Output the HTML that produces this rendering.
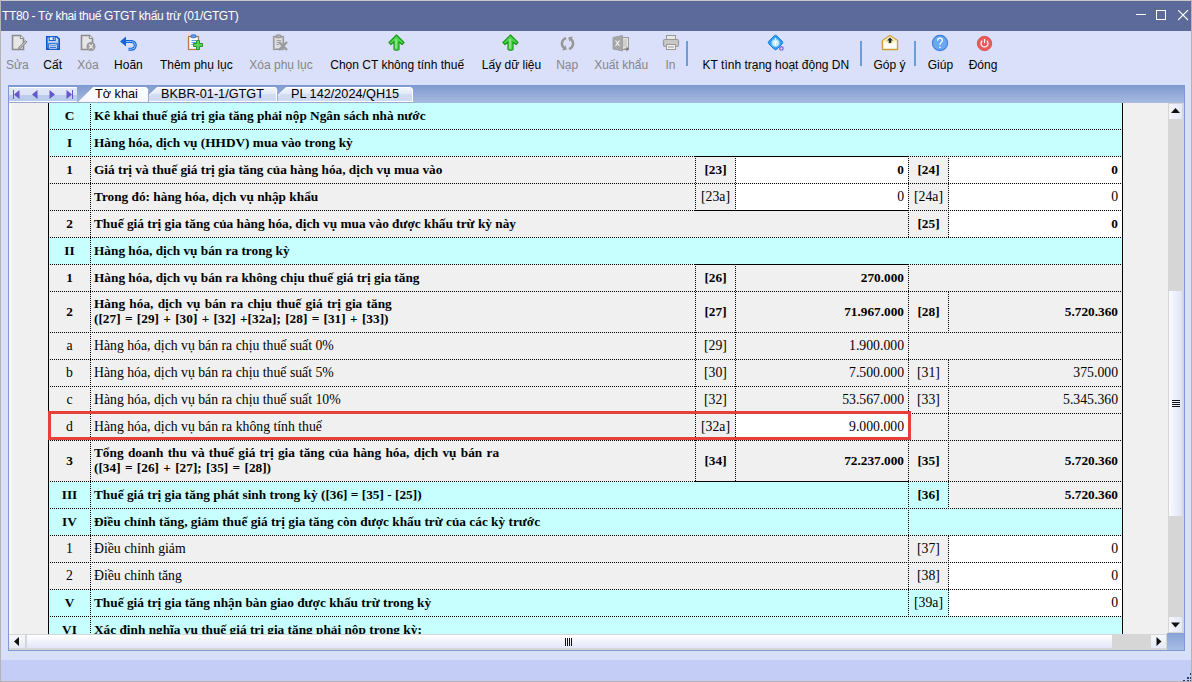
<!DOCTYPE html>
<html><head><meta charset="utf-8">
<style>
html,body{margin:0;padding:0;width:1192px;height:682px;overflow:hidden;background:#dae0f9;position:relative}
div{position:absolute;box-sizing:content-box}
.hd{height:1px;background:repeating-linear-gradient(to right,#000 0 1px,transparent 1px 2px)}
.vd{width:1px;background:repeating-linear-gradient(to bottom,#000 0 1px,transparent 1px 2px)}
.t{display:flex;align-items:center;font-family:"Liberation Serif",serif;color:#000;line-height:15px;white-space:nowrap;overflow:visible}
.t.b2{font-weight:bold;font-size:13.3px;word-spacing:1px;padding-bottom:3px;box-sizing:border-box}
.t.b{font-weight:bold;font-size:13.3px;padding-bottom:2px;box-sizing:border-box}
.t.n{font-weight:normal;font-size:13.75px;padding-bottom:1px;box-sizing:border-box}
.tab{font-family:"Liberation Sans",sans-serif;font-size:12.7px;color:#000;white-space:nowrap;line-height:15px}
.tl{font-family:"Liberation Sans",sans-serif;font-size:12px;text-align:center;white-space:nowrap;line-height:15px}
</style></head><body>
<!-- window frame -->
<div style="left:0;top:0;width:1192px;height:682px;background:#dae0f9"></div>
<div style="left:0;top:0;width:1192px;height:1px;background:#c8c8c8"></div>
<div style="left:0;top:0;width:1px;height:682px;background:#b4b4b4"></div>
<div style="left:1191px;top:0;width:1px;height:682px;background:#b4b4b4"></div>
<div style="left:0;top:681px;width:1192px;height:1px;background:#b4b4b4"></div>
<!-- title bar -->
<div style="left:1px;top:1px;width:1190px;height:30px;background:#5c6a9b"></div>
<div style="left:2px;top:9px;font-family:'Liberation Sans',sans-serif;font-size:12px;color:#fff;white-space:nowrap;letter-spacing:-0.35px;line-height:15px">TT80 - Tờ khai thuế GTGT khấu trừ (01/GTGT)</div>
<div style="left:1136px;top:14px;width:10px;height:1px;background:#fff"></div>
<div style="left:1156px;top:10px;width:8px;height:8px;border:1px solid #fff"></div>
<svg style="position:absolute;left:1178px;top:10px" width="11" height="11"><path d="M0 0L10 10M10 0L0 10" stroke="#fff" stroke-width="1.1"/></svg>
<!-- toolbar -->
<div class="tl" style="left:-82.7px;top:58px;width:200px;color:#868686">Sửa</div>
<div class="tl" style="left:-47.3px;top:58px;width:200px;color:#000">Cất</div>
<div class="tl" style="left:-12.099999999999994px;top:58px;width:200px;color:#868686">Xóa</div>
<div class="tl" style="left:28.400000000000006px;top:58px;width:200px;color:#000">Hoãn</div>
<div class="tl" style="left:96.30000000000001px;top:58px;width:200px;color:#000">Thêm phụ lục</div>
<div class="tl" style="left:181px;top:58px;width:200px;color:#868686">Xóa phụ lục</div>
<div class="tl" style="left:297.2px;top:58px;width:200px;color:#000">Chọn CT không tính thuế</div>
<div class="tl" style="left:411.5px;top:58px;width:200px;color:#000">Lấy dữ liệu</div>
<div class="tl" style="left:467.20000000000005px;top:58px;width:200px;color:#868686">Nạp</div>
<div class="tl" style="left:521.2px;top:58px;width:200px;color:#868686">Xuất khẩu</div>
<div class="tl" style="left:570.5px;top:58px;width:200px;color:#868686">In</div>
<div class="tl" style="left:675.9px;top:58px;width:200px;color:#000">KT tình trạng hoạt động DN</div>
<div class="tl" style="left:789.5px;top:58px;width:200px;color:#000">Góp ý</div>
<div class="tl" style="left:840.4px;top:58px;width:200px;color:#000">Giúp</div>
<div class="tl" style="left:883px;top:58px;width:200px;color:#000">Đóng</div>
<div style="left:686px;top:41px;width:2px;height:25px;background:#6d9dd8"></div>
<div style="left:860px;top:41px;width:2px;height:25px;background:#6d9dd8"></div>
<div style="left:914px;top:41px;width:2px;height:25px;background:#6d9dd8"></div>
<svg style="position:absolute;left:11px;top:34px" width="18" height="18" viewBox="0 0 18 18"><path d="M1.5 1.5H9.5L12.5 4.5V15.5H1.5Z" fill="#e6e6e6" stroke="#8c8c8c" stroke-width="1.6"/><path d="M9.5 1.5V4.5H12.5" fill="#fff" stroke="#8c8c8c" stroke-width="1.2"/><path d="M7 16L8 13L14.5 6.5L16 8L9.5 14.5Z" fill="#b4b4b4" stroke="#8c8c8c" stroke-width="0.9"/></svg>
<svg style="position:absolute;left:45px;top:35px" width="16" height="16" viewBox="0 0 16 16"><defs><linearGradient id="sv" x1="0" y1="0" x2="0" y2="1"><stop offset="0" stop-color="#e4eefc"/><stop offset="1" stop-color="#6e9fe6"/></linearGradient></defs><path d="M1.8 1.8H11.8L14.2 4.2V14.2H1.8Z" fill="url(#sv)" stroke="#0b55cc" stroke-width="1.6"/><rect x="4.2" y="1.8" width="6" height="3.6" fill="#fff" stroke="#0b55cc" stroke-width="1"/><rect x="7.6" y="2.6" width="1.6" height="2" fill="#0b55cc"/><rect x="3.8" y="8.8" width="8.4" height="5.4" fill="#fff" stroke="#0b55cc" stroke-width="1"/><path d="M5 10.8H11M5 12.6H11" stroke="#0b55cc" stroke-width="0.9"/></svg>
<svg style="position:absolute;left:80px;top:34px" width="17" height="18" viewBox="0 0 17 18"><path d="M1.5 1.5H9.5L12.5 4.5V15.5H1.5Z" fill="#e6e6e6" stroke="#8c8c8c" stroke-width="1.6"/><path d="M9.5 1.5V4.5H12.5" fill="#fff" stroke="#8c8c8c" stroke-width="1.2"/><circle cx="11" cy="12.5" r="4.5" fill="#9a9a9a"/><path d="M9 10.5L13 14.5M13 10.5L9 14.5" stroke="#eee" stroke-width="1.1"/></svg>
<svg style="position:absolute;left:119px;top:35px" width="18" height="16" viewBox="0 0 18 16"><path d="M6 6.5H12.5A3.8 3.8 0 0 1 12.5 14.2H9.5" fill="none" stroke="#1565d8" stroke-width="3"/><path d="M6 6.5H12.5A3.8 3.8 0 0 1 12.5 14.2H9.5" fill="none" stroke="#8fc0f8" stroke-width="1"/><path d="M1 6.5L7 1.5V11.5Z" fill="#1565d8"/></svg>
<svg style="position:absolute;left:187px;top:34px" width="17" height="17" viewBox="0 0 17 17"><rect x="1.5" y="2.5" width="10" height="13" fill="#e8f2ff" stroke="#b8784a" stroke-width="1.2"/><rect x="3" y="4" width="7" height="10" fill="#fff"/><path d="M4.5 6.5H9M4.5 8.5H9M4.5 10.5H7" stroke="#4a90e2" stroke-width="0.9"/><rect x="4" y="0.8" width="5" height="3" rx="1.2" fill="#5aa0ec" stroke="#2a6ac8" stroke-width="0.8"/><path d="M9.5 6.5H12.5V9.5H15.5V12.5H12.5V15.5H9.5V12.5H6.5V9.5H9.5Z" fill="#5ad25a" stroke="#1f9a1f" stroke-width="1"/></svg>
<svg style="position:absolute;left:272px;top:34px" width="17" height="17" viewBox="0 0 17 17"><rect x="1.5" y="2.5" width="10" height="13" fill="#bdbdbd" stroke="#9a9a9a" stroke-width="1.2"/><rect x="3" y="4" width="7" height="10" fill="#dedede"/><path d="M4.5 6.5H9M4.5 8.5H9M4.5 10.5H7" stroke="#9a9a9a" stroke-width="0.9"/><rect x="4" y="0.8" width="5" height="3" rx="1.2" fill="#b0b0b0" stroke="#8c8c8c" stroke-width="0.8"/><path d="M7 8L15 16M15 8L7 16" stroke="#9a9a9a" stroke-width="2.4"/></svg>
<svg style="position:absolute;left:388px;top:34px" width="17" height="17" viewBox="0 0 17 17"><path d="M8.5 1L16 8.5L14 10.5L11 7.8V15.5Q8.5 17 6 15.5V7.8L3 10.5L1 8.5Z" fill="#4ed64e" stroke="#1e9a1e" stroke-width="1.2" stroke-linejoin="round"/><path d="M8 5V14.5" stroke="#b8f5b8" stroke-width="1"/></svg>
<svg style="position:absolute;left:502px;top:34px" width="17" height="17" viewBox="0 0 17 17"><path d="M8.5 1L16 8.5L14 10.5L11 7.8V15.5Q8.5 17 6 15.5V7.8L3 10.5L1 8.5Z" fill="#4ed64e" stroke="#1e9a1e" stroke-width="1.2" stroke-linejoin="round"/><path d="M8 5V14.5" stroke="#b8f5b8" stroke-width="1"/></svg>
<svg style="position:absolute;left:559px;top:35px" width="17" height="17" viewBox="0 0 17 17"><path d="M7.1 3.1A5.6 5.6 0 0 0 5.3 13.1" fill="none" stroke="#979797" stroke-width="2.4"/><path d="M9.9 13.9A5.6 5.6 0 0 0 11.7 3.9" fill="none" stroke="#979797" stroke-width="2.4"/><path d="M7.7 14.8L3.0 15.4L6.7 10.2Z" fill="#979797"/><path d="M9.3 2.2L14.0 1.6L10.3 6.8Z" fill="#979797"/></svg>
<svg style="position:absolute;left:612px;top:34px" width="18" height="18" viewBox="0 0 18 18"><rect x="9.5" y="3.5" width="7" height="12" fill="#e4e4e4" stroke="#9a9a9a" stroke-width="1"/><path d="M11 6H15M11 8H15M11 10H15M11 12H15" stroke="#b0b0b0" stroke-width="0.8"/><path d="M1 3.5L10.5 1.5V17L1 15Z" fill="#a6a6a6" stroke="#999" stroke-width="0.8"/><path d="M3.5 6.5L7.5 12M7.5 6.5L3.5 12" stroke="#f2f2f2" stroke-width="1.2"/><path d="M11 14.5H14.5V12.5L17 15L14.5 17.5V15.5" fill="#777"/></svg>
<svg style="position:absolute;left:662px;top:34px" width="18" height="17" viewBox="0 0 18 17"><rect x="4.5" y="1.5" width="9" height="4" fill="#e8e8e8" stroke="#9a9a9a" stroke-width="1"/><rect x="1.5" y="5.5" width="15" height="7" rx="1.5" fill="#c8c8c8" stroke="#9a9a9a" stroke-width="1.2"/><rect x="4.5" y="10.5" width="9" height="5" fill="#f0f0f0" stroke="#9a9a9a" stroke-width="1"/><path d="M6 13H12" stroke="#9a9a9a" stroke-width="1"/></svg>
<svg style="position:absolute;left:767px;top:34px" width="18" height="18" viewBox="0 0 18 18"><path d="M8.5 1.2Q9 1 9.5 1.5L15.5 7.5Q16 8.5 15.5 9.5L9.5 15.5Q8.5 16.2 7.5 15.5L1.5 9.5Q1 8.5 1.5 7.5L7.5 1.5Q8 1 8.5 1.2Z" fill="#2f9cf2" stroke="#1a80e0" stroke-width="1"/><circle cx="8.5" cy="9" r="4" fill="#c6ebff" stroke="#6cc0f6" stroke-width="1"/><path d="M6.5 7.3H10.5V8.3H9.1V11.5H7.9V8.3H6.5Z" fill="#fff"/><circle cx="8.5" cy="4.6" r="0.9" fill="#fff8d0"/><rect x="12.8" y="12.8" width="3.2" height="3.2" rx="1" fill="none" stroke="#7a5ad8" stroke-width="1.2"/></svg>
<svg style="position:absolute;left:881px;top:34px" width="18" height="17" viewBox="0 0 18 17"><path d="M1.5 6.5L9 1.5L16.5 6.5V15.5H1.5Z" fill="#fff" stroke="#c8a030" stroke-width="1.4" stroke-linejoin="round"/><path d="M2 6.8L9 2.2L16 6.8L9 10.5Z" fill="#fbe9a6"/><path d="M9 3.5L12 6.5H10.2V9H7.8V6.5H6Z" fill="#1e2a3a"/></svg>
<svg style="position:absolute;left:931px;top:34px" width="18" height="18" viewBox="0 0 18 18"><circle cx="9" cy="9" r="7.6" fill="#6aa8f2" stroke="#3a7ede" stroke-width="1.1"/><path d="M6.6 6.8Q6.6 4.2 9 4.2Q11.4 4.2 11.4 6.6Q11.4 8 9.6 9Q9 9.4 9 11" fill="none" stroke="#fff" stroke-width="1.2"/><circle cx="9" cy="13.2" r="0.8" fill="#fff"/></svg>
<svg style="position:absolute;left:976px;top:34px" width="18" height="18" viewBox="0 0 18 18"><circle cx="8.5" cy="9.5" r="7.2" fill="#ea5a5a" stroke="#d84848" stroke-width="0.8"/><path d="M6.2 6.8A3.5 3.5 0 1 0 10.8 6.8" fill="none" stroke="#fff" stroke-width="1.2"/><path d="M8.5 5V9.2" stroke="#fff" stroke-width="1.2"/></svg>
<!-- panel border -->
<div style="left:8px;top:85px;width:1177px;height:566px;background:#7f9ad2"></div>
<svg style="position:absolute;left:8px;top:85px" width="1177" height="18" viewBox="8 85 1177 18">
<defs><linearGradient id="tsb" x1="0" y1="0" x2="0" y2="1"><stop offset="0" stop-color="#819bd0"/><stop offset="1" stop-color="#a7bbe1"/></linearGradient><linearGradient id="tin" x1="0" y1="0" x2="0" y2="1"><stop offset="0" stop-color="#f3f6fd"/><stop offset="0.45" stop-color="#e2e9f8"/><stop offset="0.5" stop-color="#d2ddf3"/><stop offset="1" stop-color="#cdd9f2"/></linearGradient><linearGradient id="nav" x1="0" y1="0" x2="0" y2="1"><stop offset="0" stop-color="#e2e8f8"/><stop offset="0.5" stop-color="#dbe3f6"/><stop offset="0.55" stop-color="#bccdec"/><stop offset="1" stop-color="#b9cbec"/></linearGradient><linearGradient id="tac" x1="0" y1="0" x2="0" y2="1"><stop offset="0" stop-color="#ffffff"/><stop offset="1" stop-color="#f4f7fd"/></linearGradient></defs>
<rect x="8" y="85" width="1177" height="18" fill="#7f9ad2"/>
<rect x="9" y="86" width="1175" height="17" fill="url(#tsb)"/>
<rect x="9" y="87" width="68" height="15" fill="url(#nav)"/>
<rect x="9" y="87" width="68" height="1" fill="#fff"/>
<rect x="9" y="101" width="68" height="1" fill="#fff"/>
<rect x="13" y="90" width="1" height="9" fill="#6655cc"/><path d="M14 94.5L19.5 90V99Z" fill="#6655cc"/>
<path d="M32 94.5L37.5 90V99Z" fill="#6655cc"/>
<path d="M55 94.5L49.5 90V99Z" fill="#6655cc"/>
<path d="M72 94.5L66.5 90V99Z" fill="#6655cc"/><rect x="72" y="90" width="1" height="9" fill="#6655cc"/>
<path d="M277 102V96L286 87H411L413 89V102Z" fill="url(#tin)"/>
<path d="M277.5 96L286.5 87.5H410.5L412.5 89.5V102" fill="none" stroke="#fff" stroke-width="1"/>
<path d="M148 102V96L157 87H275L277 89V102Z" fill="url(#tin)"/>
<path d="M148.5 96L157.5 87.5H275.5L276.5 89.5V102" fill="none" stroke="#fff" stroke-width="1"/>
<rect x="277" y="89" width="1" height="13" fill="#9aaed6"/>
<rect x="149" y="101" width="264" height="1" fill="#fff"/>
<path d="M78 102L93 87H146L148 89V102Z" fill="url(#tac)"/>
<rect x="148" y="89" width="1" height="13" fill="#9aaed6"/>
<rect x="9" y="102" width="404" height="1" fill="#9aa9cc"/>
</svg>
<div class="tab" style="left:95px;top:87px">Tờ khai</div>
<div class="tab" style="left:161px;top:87px">BKBR-01-1/GTGT</div>
<div class="tab" style="left:291px;top:87px">PL 142/2024/QH15</div>
<div id="tbl" style="left:9px;top:103px;width:1159px;height:531px;overflow:hidden;background:#f0f0f0">
<div style="left:-9px;top:-103px;width:1192px;height:682px">
<div style="left:9px;top:103px;width:5px;height:560px;background:linear-gradient(to right,#fbfbfb,#f0f0f0)"></div>
<div style="left:49px;top:103px;width:1073px;height:26px;background:#c7ffff"></div>
<div class="t b" style="left:49px;top:103px;width:41px;height:26px;justify-content:center;text-align:center;"><span>C</span></div>
<div class="vd" style="left:90px;top:102px;height:28px"></div>
<div class="t b" style="left:94px;top:103px;width:1027px;height:26px;justify-content:flex-start;text-align:left;"><span>Kê khai thuế giá trị gia tăng phải nộp Ngân sách nhà nước</span></div>
<div class="hd" style="left:50px;top:129px;width:1072px"></div>
<div style="left:49px;top:130px;width:1073px;height:26px;background:#c7ffff"></div>
<div class="t b" style="left:49px;top:130px;width:41px;height:26px;justify-content:center;text-align:center;"><span>I</span></div>
<div class="vd" style="left:90px;top:130px;height:27px"></div>
<div class="t b" style="left:94px;top:130px;width:1027px;height:26px;justify-content:flex-start;text-align:left;"><span>Hàng hóa, dịch vụ (HHDV) mua vào trong kỳ</span></div>
<div class="hd" style="left:50px;top:156px;width:1072px"></div>
<div style="left:49px;top:157px;width:1073px;height:26px;background:#f0f0f0"></div>
<div class="t b" style="left:49px;top:157px;width:41px;height:26px;justify-content:center;text-align:center;"><span>1</span></div>
<div class="vd" style="left:90px;top:156px;height:28px"></div>
<div class="t b" style="left:94px;top:157px;width:600px;height:26px;justify-content:flex-start;text-align:left;"><span>Giá trị và thuế giá trị gia tăng của hàng hóa, dịch vụ mua vào</span></div>
<div style="left:696px;top:157px;width:39px;height:26px;background:#f0f0f0"></div>
<div class="vd" style="left:695px;top:156px;height:28px"></div>
<div class="t b" style="left:696px;top:157px;width:39px;height:26px;justify-content:center;text-align:center;"><span>[23]</span></div>
<div style="left:736px;top:157px;width:172px;height:26px;background:#ffffff"></div>
<div class="vd" style="left:735px;top:156px;height:28px"></div>
<div class="t b" style="left:736px;top:157px;width:168px;height:26px;justify-content:flex-end;text-align:right;"><span>0</span></div>
<div style="left:909px;top:157px;width:39px;height:26px;background:#f0f0f0"></div>
<div class="vd" style="left:908px;top:156px;height:28px"></div>
<div class="t b" style="left:909px;top:157px;width:39px;height:26px;justify-content:center;text-align:center;"><span>[24]</span></div>
<div style="left:949px;top:157px;width:173px;height:26px;background:#ffffff"></div>
<div class="vd" style="left:948px;top:156px;height:28px"></div>
<div class="t b" style="left:949px;top:157px;width:169px;height:26px;justify-content:flex-end;text-align:right;"><span>0</span></div>
<div class="hd" style="left:50px;top:183px;width:1072px"></div>
<div style="left:49px;top:184px;width:1073px;height:26px;background:#f0f0f0"></div>
<div class="t b" style="left:49px;top:184px;width:41px;height:26px;justify-content:center;text-align:center;"><span></span></div>
<div class="vd" style="left:90px;top:184px;height:27px"></div>
<div class="t b" style="left:94px;top:184px;width:600px;height:26px;justify-content:flex-start;text-align:left;"><span>Trong đó: hàng hóa, dịch vụ nhập khẩu</span></div>
<div style="left:696px;top:184px;width:39px;height:26px;background:#f0f0f0"></div>
<div class="vd" style="left:695px;top:184px;height:27px"></div>
<div class="t n" style="left:696px;top:184px;width:39px;height:26px;justify-content:center;text-align:center;"><span>[23a]</span></div>
<div style="left:736px;top:184px;width:172px;height:26px;background:#ffffff"></div>
<div class="vd" style="left:735px;top:184px;height:27px"></div>
<div class="t n" style="left:736px;top:184px;width:168px;height:26px;justify-content:flex-end;text-align:right;"><span>0</span></div>
<div style="left:909px;top:184px;width:39px;height:26px;background:#f0f0f0"></div>
<div class="vd" style="left:908px;top:184px;height:27px"></div>
<div class="t n" style="left:909px;top:184px;width:39px;height:26px;justify-content:center;text-align:center;"><span>[24a]</span></div>
<div style="left:949px;top:184px;width:173px;height:26px;background:#ffffff"></div>
<div class="vd" style="left:948px;top:184px;height:27px"></div>
<div class="t n" style="left:949px;top:184px;width:169px;height:26px;justify-content:flex-end;text-align:right;"><span>0</span></div>
<div class="hd" style="left:50px;top:210px;width:1072px"></div>
<div style="left:49px;top:211px;width:1073px;height:26px;background:#f0f0f0"></div>
<div class="t b" style="left:49px;top:211px;width:41px;height:26px;justify-content:center;text-align:center;"><span>2</span></div>
<div class="vd" style="left:90px;top:210px;height:28px"></div>
<div class="t b" style="left:94px;top:211px;width:813px;height:26px;justify-content:flex-start;text-align:left;"><span>Thuế giá trị gia tăng của hàng hóa, dịch vụ mua vào được khấu trừ kỳ này</span></div>
<div style="left:909px;top:211px;width:39px;height:26px;background:#f0f0f0"></div>
<div class="vd" style="left:908px;top:210px;height:28px"></div>
<div class="t b" style="left:909px;top:211px;width:39px;height:26px;justify-content:center;text-align:center;"><span>[25]</span></div>
<div style="left:949px;top:211px;width:173px;height:26px;background:#ffffff"></div>
<div class="vd" style="left:948px;top:210px;height:28px"></div>
<div class="t b" style="left:949px;top:211px;width:169px;height:26px;justify-content:flex-end;text-align:right;"><span>0</span></div>
<div class="hd" style="left:50px;top:237px;width:1072px"></div>
<div style="left:49px;top:238px;width:1073px;height:26px;background:#c7ffff"></div>
<div class="t b" style="left:49px;top:238px;width:41px;height:26px;justify-content:center;text-align:center;"><span>II</span></div>
<div class="vd" style="left:90px;top:238px;height:27px"></div>
<div class="t b" style="left:94px;top:238px;width:1027px;height:26px;justify-content:flex-start;text-align:left;"><span>Hàng hóa, dịch vụ bán ra trong kỳ</span></div>
<div class="hd" style="left:50px;top:264px;width:1072px"></div>
<div style="left:49px;top:265px;width:1073px;height:26px;background:#f0f0f0"></div>
<div class="t b" style="left:49px;top:265px;width:41px;height:26px;justify-content:center;text-align:center;"><span>1</span></div>
<div class="vd" style="left:90px;top:264px;height:28px"></div>
<div class="t b" style="left:94px;top:265px;width:600px;height:26px;justify-content:flex-start;text-align:left;"><span>Hàng hóa, dịch vụ bán ra không chịu thuế giá trị gia tăng</span></div>
<div style="left:696px;top:265px;width:39px;height:26px;background:#f0f0f0"></div>
<div class="vd" style="left:695px;top:264px;height:28px"></div>
<div class="t b" style="left:696px;top:265px;width:39px;height:26px;justify-content:center;text-align:center;"><span>[26]</span></div>
<div style="left:736px;top:265px;width:172px;height:26px;background:#f0f0f0"></div>
<div class="vd" style="left:735px;top:264px;height:28px"></div>
<div class="t b" style="left:736px;top:265px;width:168px;height:26px;justify-content:flex-end;text-align:right;"><span>270.000</span></div>
<div style="left:909px;top:265px;width:213px;height:26px;background:#f0f0f0"></div>
<div class="vd" style="left:908px;top:264px;height:28px"></div>
<div class="hd" style="left:50px;top:291px;width:1072px"></div>
<div style="left:49px;top:292px;width:1073px;height:40px;background:#f0f0f0"></div>
<div class="t b" style="left:49px;top:292px;width:41px;height:40px;justify-content:center;text-align:center;"><span>2</span></div>
<div class="vd" style="left:90px;top:292px;height:41px"></div>
<div class="t b2" style="left:94px;top:292px;width:600px;height:40px;justify-content:flex-start;text-align:left;"><span>Hàng hóa, dịch vụ bán ra chịu thuế giá trị gia tăng<br>([27] = [29] + [30] + [32] +[32a]; [28] = [31] + [33])</span></div>
<div style="left:696px;top:292px;width:39px;height:40px;background:#f0f0f0"></div>
<div class="vd" style="left:695px;top:292px;height:41px"></div>
<div class="t b" style="left:696px;top:292px;width:39px;height:40px;justify-content:center;text-align:center;"><span>[27]</span></div>
<div style="left:736px;top:292px;width:172px;height:40px;background:#f0f0f0"></div>
<div class="vd" style="left:735px;top:292px;height:41px"></div>
<div class="t b" style="left:736px;top:292px;width:168px;height:40px;justify-content:flex-end;text-align:right;"><span>71.967.000</span></div>
<div style="left:909px;top:292px;width:39px;height:40px;background:#f0f0f0"></div>
<div class="vd" style="left:908px;top:292px;height:41px"></div>
<div class="t b" style="left:909px;top:292px;width:39px;height:40px;justify-content:center;text-align:center;"><span>[28]</span></div>
<div style="left:949px;top:292px;width:173px;height:40px;background:#f0f0f0"></div>
<div class="vd" style="left:948px;top:292px;height:41px"></div>
<div class="t b" style="left:949px;top:292px;width:169px;height:40px;justify-content:flex-end;text-align:right;"><span>5.720.360</span></div>
<div class="hd" style="left:50px;top:332px;width:1072px"></div>
<div style="left:49px;top:333px;width:1073px;height:26px;background:#f0f0f0"></div>
<div class="t n" style="left:49px;top:333px;width:41px;height:26px;justify-content:center;text-align:center;"><span>a</span></div>
<div class="vd" style="left:90px;top:332px;height:28px"></div>
<div class="t n" style="left:94px;top:333px;width:600px;height:26px;justify-content:flex-start;text-align:left;"><span>Hàng hóa, dịch vụ bán ra chịu thuế suất 0%</span></div>
<div style="left:696px;top:333px;width:39px;height:26px;background:#f0f0f0"></div>
<div class="vd" style="left:695px;top:332px;height:28px"></div>
<div class="t n" style="left:696px;top:333px;width:39px;height:26px;justify-content:center;text-align:center;"><span>[29]</span></div>
<div style="left:736px;top:333px;width:172px;height:26px;background:#f0f0f0"></div>
<div class="vd" style="left:735px;top:332px;height:28px"></div>
<div class="t n" style="left:736px;top:333px;width:168px;height:26px;justify-content:flex-end;text-align:right;"><span>1.900.000</span></div>
<div style="left:909px;top:333px;width:213px;height:26px;background:#f0f0f0"></div>
<div class="vd" style="left:908px;top:332px;height:28px"></div>
<div class="hd" style="left:50px;top:359px;width:1072px"></div>
<div style="left:49px;top:360px;width:1073px;height:26px;background:#f0f0f0"></div>
<div class="t n" style="left:49px;top:360px;width:41px;height:26px;justify-content:center;text-align:center;"><span>b</span></div>
<div class="vd" style="left:90px;top:360px;height:27px"></div>
<div class="t n" style="left:94px;top:360px;width:600px;height:26px;justify-content:flex-start;text-align:left;"><span>Hàng hóa, dịch vụ bán ra chịu thuế suất 5%</span></div>
<div style="left:696px;top:360px;width:39px;height:26px;background:#f0f0f0"></div>
<div class="vd" style="left:695px;top:360px;height:27px"></div>
<div class="t n" style="left:696px;top:360px;width:39px;height:26px;justify-content:center;text-align:center;"><span>[30]</span></div>
<div style="left:736px;top:360px;width:172px;height:26px;background:#f0f0f0"></div>
<div class="vd" style="left:735px;top:360px;height:27px"></div>
<div class="t n" style="left:736px;top:360px;width:168px;height:26px;justify-content:flex-end;text-align:right;"><span>7.500.000</span></div>
<div style="left:909px;top:360px;width:39px;height:26px;background:#f0f0f0"></div>
<div class="vd" style="left:908px;top:360px;height:27px"></div>
<div class="t n" style="left:909px;top:360px;width:39px;height:26px;justify-content:center;text-align:center;"><span>[31]</span></div>
<div style="left:949px;top:360px;width:173px;height:26px;background:#f0f0f0"></div>
<div class="vd" style="left:948px;top:360px;height:27px"></div>
<div class="t n" style="left:949px;top:360px;width:169px;height:26px;justify-content:flex-end;text-align:right;"><span>375.000</span></div>
<div class="hd" style="left:50px;top:386px;width:1072px"></div>
<div style="left:49px;top:387px;width:1073px;height:26px;background:#f0f0f0"></div>
<div class="t n" style="left:49px;top:387px;width:41px;height:26px;justify-content:center;text-align:center;"><span>c</span></div>
<div class="vd" style="left:90px;top:386px;height:28px"></div>
<div class="t n" style="left:94px;top:387px;width:600px;height:26px;justify-content:flex-start;text-align:left;"><span>Hàng hóa, dịch vụ bán ra chịu thuế suất 10%</span></div>
<div style="left:696px;top:387px;width:39px;height:26px;background:#f0f0f0"></div>
<div class="vd" style="left:695px;top:386px;height:28px"></div>
<div class="t n" style="left:696px;top:387px;width:39px;height:26px;justify-content:center;text-align:center;"><span>[32]</span></div>
<div style="left:736px;top:387px;width:172px;height:26px;background:#f0f0f0"></div>
<div class="vd" style="left:735px;top:386px;height:28px"></div>
<div class="t n" style="left:736px;top:387px;width:168px;height:26px;justify-content:flex-end;text-align:right;"><span>53.567.000</span></div>
<div style="left:909px;top:387px;width:39px;height:26px;background:#f0f0f0"></div>
<div class="vd" style="left:908px;top:386px;height:28px"></div>
<div class="t n" style="left:909px;top:387px;width:39px;height:26px;justify-content:center;text-align:center;"><span>[33]</span></div>
<div style="left:949px;top:387px;width:173px;height:26px;background:#f0f0f0"></div>
<div class="vd" style="left:948px;top:386px;height:28px"></div>
<div class="t n" style="left:949px;top:387px;width:169px;height:26px;justify-content:flex-end;text-align:right;"><span>5.345.360</span></div>
<div class="hd" style="left:50px;top:413px;width:1072px"></div>
<div style="left:49px;top:414px;width:1073px;height:26px;background:#f0f0f0"></div>
<div class="t n" style="left:49px;top:414px;width:41px;height:26px;justify-content:center;text-align:center;"><span>d</span></div>
<div class="vd" style="left:90px;top:414px;height:27px"></div>
<div class="t n" style="left:94px;top:414px;width:600px;height:26px;justify-content:flex-start;text-align:left;"><span>Hàng hóa, dịch vụ bán ra không tính thuế</span></div>
<div style="left:696px;top:414px;width:39px;height:26px;background:#f0f0f0"></div>
<div class="vd" style="left:695px;top:414px;height:27px"></div>
<div class="t n" style="left:696px;top:414px;width:39px;height:26px;justify-content:center;text-align:center;"><span>[32a]</span></div>
<div style="left:736px;top:414px;width:172px;height:26px;background:#ffffff"></div>
<div class="vd" style="left:735px;top:414px;height:27px"></div>
<div class="t n" style="left:736px;top:414px;width:168px;height:26px;justify-content:flex-end;text-align:right;"><span>9.000.000</span></div>
<div style="left:909px;top:414px;width:39px;height:26px;background:#f0f0f0"></div>
<div class="vd" style="left:908px;top:414px;height:27px"></div>
<div style="left:949px;top:414px;width:173px;height:26px;background:#f0f0f0"></div>
<div class="vd" style="left:948px;top:414px;height:27px"></div>
<div class="hd" style="left:50px;top:440px;width:1072px"></div>
<div style="left:49px;top:441px;width:1073px;height:40px;background:#f0f0f0"></div>
<div class="t b" style="left:49px;top:441px;width:41px;height:40px;justify-content:center;text-align:center;"><span>3</span></div>
<div class="vd" style="left:90px;top:440px;height:42px"></div>
<div class="t b2" style="left:94px;top:441px;width:600px;height:40px;justify-content:flex-start;text-align:left;"><span>Tổng doanh thu và thuế giá trị gia tăng của hàng hóa, dịch vụ bán ra<br>([34] = [26] + [27]; [35] = [28])</span></div>
<div style="left:696px;top:441px;width:39px;height:40px;background:#f0f0f0"></div>
<div class="vd" style="left:695px;top:440px;height:42px"></div>
<div class="t b" style="left:696px;top:441px;width:39px;height:40px;justify-content:center;text-align:center;"><span>[34]</span></div>
<div style="left:736px;top:441px;width:172px;height:40px;background:#f0f0f0"></div>
<div class="vd" style="left:735px;top:440px;height:42px"></div>
<div class="t b" style="left:736px;top:441px;width:168px;height:40px;justify-content:flex-end;text-align:right;"><span>72.237.000</span></div>
<div style="left:909px;top:441px;width:39px;height:40px;background:#f0f0f0"></div>
<div class="vd" style="left:908px;top:440px;height:42px"></div>
<div class="t b" style="left:909px;top:441px;width:39px;height:40px;justify-content:center;text-align:center;"><span>[35]</span></div>
<div style="left:949px;top:441px;width:173px;height:40px;background:#f0f0f0"></div>
<div class="vd" style="left:948px;top:440px;height:42px"></div>
<div class="t b" style="left:949px;top:441px;width:169px;height:40px;justify-content:flex-end;text-align:right;"><span>5.720.360</span></div>
<div class="hd" style="left:50px;top:481px;width:1072px"></div>
<div style="left:49px;top:482px;width:1073px;height:26px;background:#c7ffff"></div>
<div class="t b" style="left:49px;top:482px;width:41px;height:26px;justify-content:center;text-align:center;"><span>III</span></div>
<div class="vd" style="left:90px;top:482px;height:27px"></div>
<div class="t b" style="left:94px;top:482px;width:813px;height:26px;justify-content:flex-start;text-align:left;"><span>Thuế giá trị gia tăng phát sinh trong kỳ ([36] = [35] - [25])</span></div>
<div style="left:909px;top:482px;width:39px;height:26px;background:#c7ffff"></div>
<div class="vd" style="left:908px;top:482px;height:27px"></div>
<div class="t b" style="left:909px;top:482px;width:39px;height:26px;justify-content:center;text-align:center;"><span>[36]</span></div>
<div style="left:949px;top:482px;width:173px;height:26px;background:#f0f0f0"></div>
<div class="vd" style="left:948px;top:482px;height:27px"></div>
<div class="t b" style="left:949px;top:482px;width:169px;height:26px;justify-content:flex-end;text-align:right;"><span>5.720.360</span></div>
<div class="hd" style="left:50px;top:508px;width:1072px"></div>
<div style="left:49px;top:509px;width:1073px;height:26px;background:#c7ffff"></div>
<div class="t b" style="left:49px;top:509px;width:41px;height:26px;justify-content:center;text-align:center;"><span>IV</span></div>
<div class="vd" style="left:90px;top:508px;height:28px"></div>
<div class="t b" style="left:94px;top:509px;width:813px;height:26px;justify-content:flex-start;text-align:left;"><span>Điều chỉnh tăng, giảm thuế giá trị gia tăng còn được khấu trừ của các kỳ trước</span></div>
<div style="left:909px;top:509px;width:213px;height:26px;background:#c7ffff"></div>
<div class="vd" style="left:908px;top:508px;height:28px"></div>
<div class="hd" style="left:50px;top:535px;width:1072px"></div>
<div style="left:49px;top:536px;width:1073px;height:26px;background:#f0f0f0"></div>
<div class="t n" style="left:49px;top:536px;width:41px;height:26px;justify-content:center;text-align:center;"><span>1</span></div>
<div class="vd" style="left:90px;top:536px;height:27px"></div>
<div class="t n" style="left:94px;top:536px;width:813px;height:26px;justify-content:flex-start;text-align:left;"><span>Điều chỉnh giảm</span></div>
<div style="left:909px;top:536px;width:39px;height:26px;background:#f0f0f0"></div>
<div class="vd" style="left:908px;top:536px;height:27px"></div>
<div class="t n" style="left:909px;top:536px;width:39px;height:26px;justify-content:center;text-align:center;"><span>[37]</span></div>
<div style="left:949px;top:536px;width:173px;height:26px;background:#ffffff"></div>
<div class="vd" style="left:948px;top:536px;height:27px"></div>
<div class="t n" style="left:949px;top:536px;width:169px;height:26px;justify-content:flex-end;text-align:right;"><span>0</span></div>
<div class="hd" style="left:50px;top:562px;width:1072px"></div>
<div style="left:49px;top:563px;width:1073px;height:26px;background:#f0f0f0"></div>
<div class="t n" style="left:49px;top:563px;width:41px;height:26px;justify-content:center;text-align:center;"><span>2</span></div>
<div class="vd" style="left:90px;top:562px;height:28px"></div>
<div class="t n" style="left:94px;top:563px;width:813px;height:26px;justify-content:flex-start;text-align:left;"><span>Điều chỉnh tăng</span></div>
<div style="left:909px;top:563px;width:39px;height:26px;background:#f0f0f0"></div>
<div class="vd" style="left:908px;top:562px;height:28px"></div>
<div class="t n" style="left:909px;top:563px;width:39px;height:26px;justify-content:center;text-align:center;"><span>[38]</span></div>
<div style="left:949px;top:563px;width:173px;height:26px;background:#ffffff"></div>
<div class="vd" style="left:948px;top:562px;height:28px"></div>
<div class="t n" style="left:949px;top:563px;width:169px;height:26px;justify-content:flex-end;text-align:right;"><span>0</span></div>
<div class="hd" style="left:50px;top:589px;width:1072px"></div>
<div style="left:49px;top:590px;width:1073px;height:26px;background:#c7ffff"></div>
<div class="t b" style="left:49px;top:590px;width:41px;height:26px;justify-content:center;text-align:center;"><span>V</span></div>
<div class="vd" style="left:90px;top:590px;height:27px"></div>
<div class="t b" style="left:94px;top:590px;width:813px;height:26px;justify-content:flex-start;text-align:left;"><span>Thuế giá trị gia tăng nhận bàn giao được khấu trừ trong kỳ</span></div>
<div style="left:909px;top:590px;width:39px;height:26px;background:#c7ffff"></div>
<div class="vd" style="left:908px;top:590px;height:27px"></div>
<div class="t n" style="left:909px;top:590px;width:39px;height:26px;justify-content:center;text-align:center;"><span>[39a]</span></div>
<div style="left:949px;top:590px;width:173px;height:26px;background:#ffffff"></div>
<div class="vd" style="left:948px;top:590px;height:27px"></div>
<div class="t n" style="left:949px;top:590px;width:169px;height:26px;justify-content:flex-end;text-align:right;"><span>0</span></div>
<div class="hd" style="left:50px;top:616px;width:1072px"></div>
<div style="left:49px;top:617px;width:1073px;height:26px;background:#c7ffff"></div>
<div class="t b" style="left:49px;top:617px;width:41px;height:26px;justify-content:center;text-align:center;"><span>VI</span></div>
<div class="vd" style="left:90px;top:616px;height:28px"></div>
<div class="t b" style="left:94px;top:617px;width:1027px;height:26px;justify-content:flex-start;text-align:left;"><span>Xác định nghĩa vụ thuế giá trị gia tăng phải nộp trong kỳ:</span></div>
<div class="hd" style="left:50px;top:643px;width:1072px"></div>
<div style="left:695px;top:156px;width:214px;height:1px;background:#000"></div>
<div style="left:695px;top:210px;width:214px;height:1px;background:#000"></div>
<div style="left:695px;top:264px;width:214px;height:1px;background:#000"></div>
<div style="left:695px;top:481px;width:214px;height:1px;background:#000"></div>
<div style="left:48px;top:102px;width:1px;height:599px;background:#000"></div>
<div style="left:1122px;top:102px;width:1px;height:599px;background:#000"></div>
<div style="left:48px;top:411px;width:857px;height:23px;border:3px solid #e5403a"></div>
</div></div>
<div style="left:1168px;top:103px;width:16px;height:530px;background:#d6d6d6"></div>
<div style="left:1169px;top:104px;width:13px;height:15px;background:linear-gradient(to right,#f4f6fc,#e4e8f8)"></div>
<svg style="position:absolute;left:1169px;top:104px" width="14" height="15"><path d="M2 9L6.5 4L11 9Z" fill="#111"/></svg>
<div style="left:1169px;top:291px;width:13px;height:225px;background:linear-gradient(to right,#fafbff,#dfe3f8)"></div>
<svg style="position:absolute;left:1169px;top:398px" width="14" height="12"><path d="M3 2.5H11M3 4.5H11M3 6.5H11M3 8.5H11" stroke="#111" stroke-width="1"/></svg>
<div style="left:1169px;top:617px;width:13px;height:15px;background:linear-gradient(to right,#f4f6fc,#e4e8f8)"></div>
<svg style="position:absolute;left:1169px;top:617px" width="14" height="15"><path d="M2 5.5L6.5 10.5L11 5.5Z" fill="#111"/></svg>
<div style="left:9px;top:634px;width:1158px;height:16px;background:#d6d6d6"></div>
<div style="left:9px;top:635px;width:16px;height:13px;background:linear-gradient(#f6f8fd,#e6eaf8)"></div>
<svg style="position:absolute;left:9px;top:635px" width="16" height="13"><path d="M5 6.5L10 2V11Z" fill="#111"/></svg>
<div style="left:27px;top:635px;width:1085px;height:13px;background:linear-gradient(#ffffff,#e2e6f8)"></div>
<svg style="position:absolute;left:563px;top:637px" width="12" height="10"><path d="M2.5 1V9M4.5 1V9M6.5 1V9M8.5 1V9" stroke="#111" stroke-width="1"/></svg>
<div style="left:1151px;top:635px;width:15px;height:13px;background:linear-gradient(#f6f8fd,#e6eaf8)"></div>
<svg style="position:absolute;left:1151px;top:635px" width="15" height="13"><path d="M10.5 6.5L5.5 2V11Z" fill="#111"/></svg>
<div style="left:1167px;top:633px;width:17px;height:17px;background:linear-gradient(#87a3d7,#a7bde3)"></div>
<!-- status -->
<div style="left:1px;top:651px;width:1190px;height:9px;background:#d8e0f9"></div>
<div style="left:1px;top:660px;width:1190px;height:21px;background:#c3cdf5"></div>
<div style="left:1190px;top:673px;width:1px;height:2px;background:#2a3a6a"></div>
<div style="left:1187px;top:677px;width:2px;height:2px;background:#2a3a6a"></div>
<div style="left:1190px;top:677px;width:1px;height:2px;background:#2a3a6a"></div>
<div style="left:1183px;top:680px;width:2px;height:1px;background:#2a3a6a"></div>
<div style="left:1187px;top:680px;width:2px;height:1px;background:#2a3a6a"></div>
<div style="left:1190px;top:680px;width:1px;height:1px;background:#2a3a6a"></div>
</body></html>
